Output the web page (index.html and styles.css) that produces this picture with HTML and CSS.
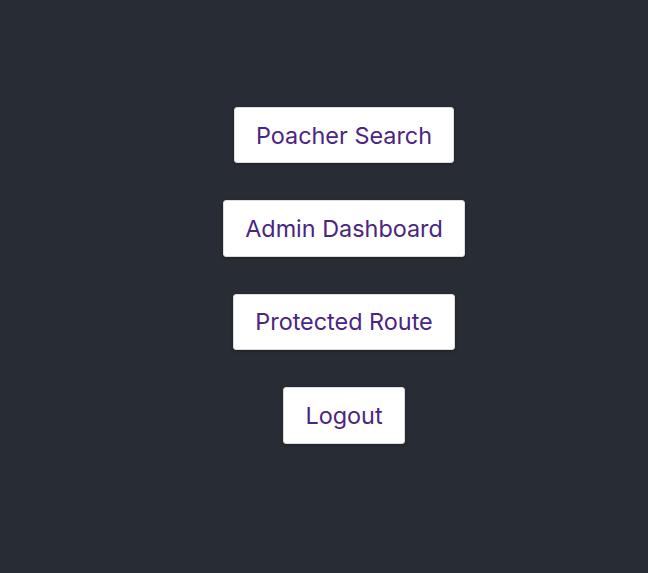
FILE: index.html
```html
<!DOCTYPE html>
<html lang="en">
<head>
  <meta charset="UTF-8">
  <meta name="viewport" content="width=device-width, initial-scale=1.0">
  <title>Home</title>
  <link rel="stylesheet" href="styles.css">
</head>
<body>
  <div class="app">
    <!-- Navigation buttons -->
    <div class="nav-list">
      <button class="nav-btn">Poacher Search</button>
      <button class="nav-btn">Admin Dashboard</button>
      <button class="nav-btn">Protected Route</button>
      <button class="nav-btn">Logout</button>
    </div>
  </div>
</body>
</html>
```

FILE: styles.css
```css
/* General Styling */
html, body {
  margin: 0;
  height: 100%;
}

body {
  background: #282c34;
  font-family: Inter, "Noto Sans", sans-serif;
}

.app {
  min-height: 100%;
  padding: 107px 0 0 40px;
  box-sizing: border-box;
}

.nav-list {
  display: flex;
  flex-direction: column;
  align-items: center;
  gap: 37px;
}

/* Buttons */
.nav-btn {
  background: #fff;
  color: #4b2582;
  font-family: inherit;
  font-size: 23.4px;
  height: 56.4px;
  padding: 0 21px;
  border: 1px solid #ddd;
  border-radius: 3px;
  box-shadow: 0 1px 3px rgba(0, 0, 0, 0.3);
  cursor: pointer;
}
```
